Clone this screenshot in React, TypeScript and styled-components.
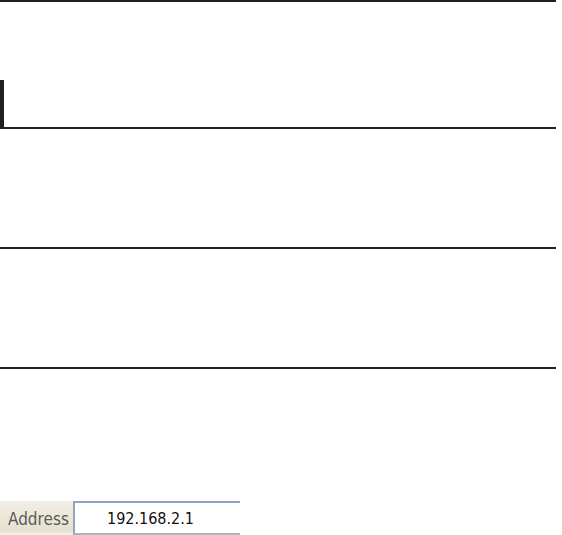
import styled, { createGlobalStyle } from "styled-components";

const Global = createGlobalStyle`
  html, body {
    margin: 0;
    padding: 0;
    background: #ffffff;
  }
  body {
    font-family: "DejaVu Sans", "Liberation Sans", sans-serif;
  }
`;

const Page = styled.div`
  width: 562px;
  height: 535px;
  display: flex;
  flex-direction: column;
  overflow: hidden;
`;

const Rule = styled.div<{ $top: number }>`
  width: 556px;
  height: 2px;
  margin-top: ${(p) => p.$top}px;
  background: #231f20;
  flex-shrink: 0;
`;

const Heading = styled.div`
  width: 552px;
  height: 47px;
  margin-top: 78px;
  border-left: 4px solid #231f20;
  border-bottom: 2px solid #231f20;
  flex-shrink: 0;
`;

const AddressBar = styled.div`
  margin-top: 132px;
  width: 240px;
  height: 35px;
  display: flex;
  align-items: stretch;
  flex-shrink: 0;
  background: linear-gradient(#f1efe4, #e6e2cf 85%, #f7f6f0);
`;

const AddressLabel = styled.div`
  width: 73px;
  display: flex;
  align-items: center;
  padding-left: 8px;
  box-sizing: border-box;
  font-size: 17px;
  color: #5a5a5a;
  font-family: "DejaVu Sans Condensed", "DejaVu Sans", sans-serif;
`;

const AddressField = styled.div`
  flex: 1;
  display: flex;
  align-items: center;
  padding-left: 32px;
  background: #ffffff;
  border-top: 2px solid #8fa6bf;
  border-left: 2px solid #8fa6bf;
  border-bottom: 3px solid #a7b6c8;
  font-size: 16px;
  color: #111111;
  font-family: "DejaVu Sans Condensed", "DejaVu Sans", sans-serif;
`;

export default function App() {
  return (
    <Page>
      <Global />
      <Rule $top={0} />
      <Heading />
      <Rule $top={118} />
      <Rule $top={118} />
      <AddressBar>
        <AddressLabel>Address</AddressLabel>
        <AddressField>192.168.2.1</AddressField>
      </AddressBar>
    </Page>
  );
}
